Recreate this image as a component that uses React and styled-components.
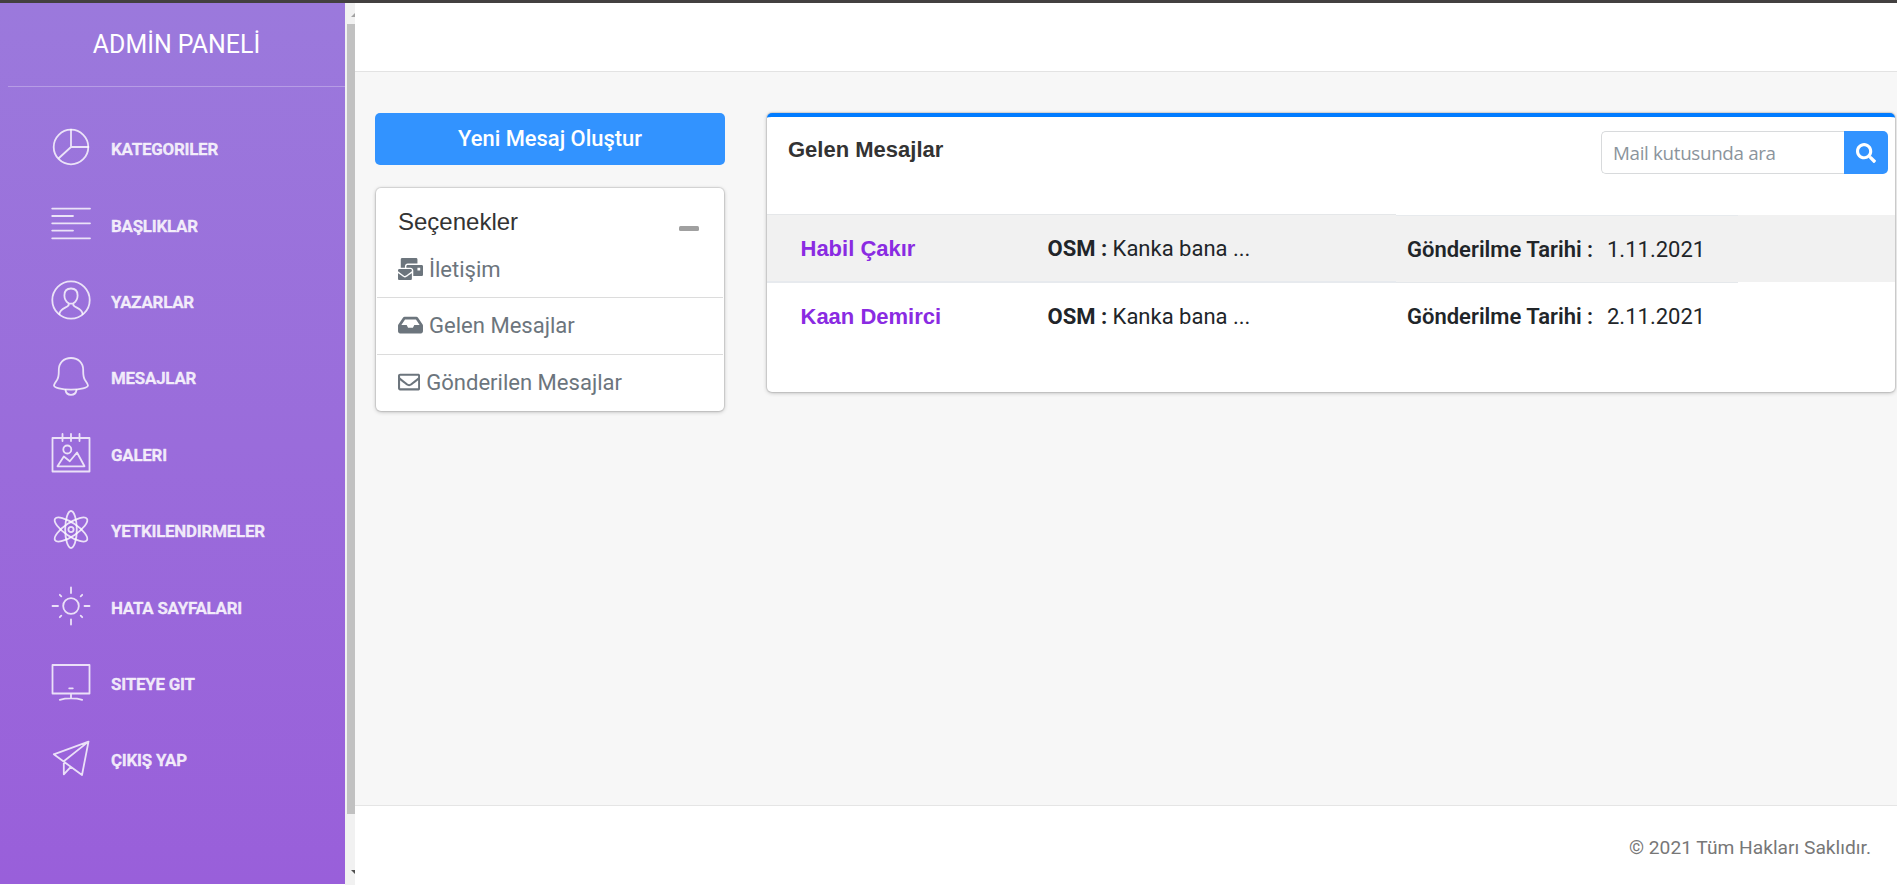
import React from "react";
import styled, { createGlobalStyle } from "styled-components";
import { FaMailBulk, FaInbox, FaRegEnvelope, FaSearch } from "react-icons/fa";

const GlobalStyle = createGlobalStyle`
  * { box-sizing: border-box; }
  html, body { margin: 0; padding: 0; }
  body { font-family: Roboto, "Liberation Sans", sans-serif; color: #212529; overflow: hidden; }
`;

const Page = styled.div`
  display: flex;
  width: 1897px;
  height: 885px;
  border-top: 3px solid #434040;
  background: #fff;
`;

const Sidebar = styled.aside`
  width: 345px;
  height: 881px;
  flex: none;
  background: linear-gradient(180deg, #9b79dc 0%, #995fda 100%);
`;

const Brand = styled.div`
  height: 84px;
  margin-left: 8px;
  padding-top: 26px;
  border-bottom: 1px solid rgba(255, 255, 255, 0.28);
  color: #fff;
  font-size: 24.9px;
  line-height: 32px;
  text-align: center;
`;

const Nav = styled.nav`
  display: flex;
  flex-direction: column;
  padding-top: 24px;
`;

const NavItem = styled.a`
  display: flex;
  align-items: center;
  height: 76.4px;
  padding-left: 51px;
  gap: 20px;
  color: rgba(255, 255, 255, 0.86);
  font-size: 16.9px;
  font-weight: 700;
  letter-spacing: -0.22px;
  -webkit-text-stroke: 0.35px rgba(255, 255, 255, 0.7);
  white-space: nowrap;

  svg {
    width: 40px;
    height: 40px;
    flex: none;
    margin-top: -4px;
    overflow: visible;
    fill: none;
    stroke: rgba(255, 255, 255, 0.8);
    stroke-width: 1.8;
    stroke-linecap: round;
    stroke-linejoin: round;
  }
`;

const ScrollTrack = styled.div`
  display: flex;
  flex-direction: column;
  justify-content: space-between;
  width: 10px;
  flex: none;
  padding-left: 2px;
  background: #f1f1f1;
`;

const ScrollThumb = styled.div`
  height: 790px;
  background: #c1c1c1;
`;

const ScrollArrow = styled.svg`
  display: block;
  width: 4px;
  height: 4px;
  margin: ${(p) => (p.$down ? "0 0 11px 4px" : "10px 0 7px 4px")};
  fill: ${(p) => (p.$down ? "#505050" : "#a3a3a3")};
`;

const ScrollHead = styled.div`
  display: flex;
  flex-direction: column;
`;

const Main = styled.div`
  display: flex;
  flex-direction: column;
  flex: 1;
  min-width: 0;
`;

const TopBar = styled.header`
  height: 69px;
  flex: none;
  background: #fff;
  border-bottom: 1px solid #e3e3e3;
`;

const Content = styled.main`
  display: flex;
  align-items: flex-start;
  gap: 42px;
  flex: 1;
  padding: 41px 2px 0 20px;
  background: #f7f7f7;
`;

const Footer = styled.footer`
  height: 80px;
  flex: none;
  padding: 27px 26px 0 0;
  border-top: 1px solid #e5e5e5;
  background: #fff;
  color: #777;
  font-size: 19.2px;
  line-height: 30px;
  text-align: right;
`;

const SideColumn = styled.div`
  display: flex;
  flex-direction: column;
  gap: 23px;
  width: 350px;
  flex: none;
`;

const ComposeButton = styled.button`
  height: 52px;
  padding: 0;
  border: 0;
  border-radius: 5px;
  background: #3293ff;
  color: #fff;
  font: 500 21.9px/50px Roboto, sans-serif;
`;

const Card = styled.section`
  border-radius: 5px;
  background: #fff;
  box-shadow: 0 0 1px 1px rgba(0, 0, 0, 0.1), 0 1px 4px rgba(0, 0, 0, 0.24);
`;

const OptionsCard = styled(Card)`
  height: 223px;
  margin: 0 1px;
  padding: 0 1px;
`;

const OptionsHead = styled.div`
  display: flex;
  align-items: center;
  justify-content: space-between;
  height: 53px;
  padding: 15px 24px 0 21px;
`;

const OptionsTitle = styled.h3`
  margin: 0;
  color: #333;
  font: 400 24px/30px "Liberation Sans", Arial, sans-serif;
`;

const Minus = styled.span`
  width: 20px;
  height: 5px;
  margin-top: 12px;
  border-radius: 1.5px;
  background: #a0a0a0;
`;

const Option = styled.a`
  display: flex;
  align-items: center;
  gap: 6px;
  height: 57px;
  padding: 0 0 ${(p) => p.$lift || 0}px 21px;
  border-bottom: ${(p) => (p.$last ? "0" : "1px solid #dcdcdc")};
  color: #6c757d;
  font-size: 22.05px;

  svg {
    width: ${(p) => p.$icon || 25}px;
    height: 22.2px;
    flex: none;
  }
`;

const InboxCard = styled(Card)`
  flex: 1;
  height: 279px;
  border-top: 4px solid #007bff;
`;

const InboxHead = styled.div`
  display: flex;
  justify-content: space-between;
  align-items: flex-start;
  height: 97px;
  padding: 14px 7px 0 21px;
`;

const InboxTitle = styled.h3`
  margin: 5px 0 0;
  color: #333;
  font: 700 22px/28px "Liberation Sans", Arial, sans-serif;
`;

const SearchBox = styled.div`
  display: flex;
  width: 287px;
  height: 43px;
`;

const SearchInput = styled.input`
  flex: 1;
  min-width: 0;
  padding: 0 12px 0 11px;
  border: 1px solid #d8dadc;
  border-right: 0;
  border-radius: 5px 0 0 5px;
  outline: 0;
  font: 400 18.8px "Open Sans", "Noto Sans", sans-serif;
  letter-spacing: -0.33px;

  &::placeholder { color: #8b949c; opacity: 1; }
`;

const SearchButton = styled.button`
  display: flex;
  align-items: center;
  justify-content: center;
  width: 44px;
  padding: 0;
  border: 0;
  border-radius: 0 5px 5px 0;
  background: #3293ff;
  color: #fff;
  font-size: 20px;
`;

const Row = styled.div`
  display: flex;
  height: 68px;
  font-size: 22px;
  line-height: 32px;
  white-space: nowrap;
`;

const cellFill = (p) => (p.$shaded ? "#f1f1f1" : "transparent");

const LeadCells = styled.div`
  display: flex;
  width: 629px;
  height: ${(p) => (p.$shaded ? 69 : 68)}px;
  padding: 18px 0 0 33.5px;
  border-top: 1px solid ${(p) => (p.$shaded ? "#e5e7e9" : "transparent")};
  border-bottom: ${(p) => (p.$shaded ? "2px solid #e7eaee" : "0")};
  background: ${cellFill};
`;

const Sender = styled.a`
  width: 247px;
  padding-top: 1px;
  color: #8a2be2;
  font: 700 22px/30px "Liberation Sans", Arial, sans-serif;
`;

const DateCell = styled.div`
  display: flex;
  width: 342px;
  height: ${(p) => (p.$shaded ? 68 : 67)}px;
  margin-top: 1px;
  padding: ${(p) => (p.$shaded ? 18 : 17)}px 0 0 11px;
  border-top: 1px solid ${(p) => (p.$shaded ? "#e7eaed" : "transparent")};
  border-bottom: ${(p) => (p.$shaded ? "1px solid #e5e8eb" : "0")};
  background: ${cellFill};
`;

const DateLabel = styled.b`
  width: 200px;
  font-weight: 600;
`;

const Strong = styled.b`
  font-weight: 700;
`;

const RowTail = styled.div`
  flex: 1;
  margin-top: 1px;
  background: ${cellFill};
`;

const navItems = [
  { label: "KATEGORILER", icon: <><circle cx="20" cy="20" r="17.3" /><path d="M20 2.7V20H37.3M20 20L8 31" /></> },
  { label: "BAŞLIKLAR", icon: <path d="M1.2 4.6H39M1.2 12H22M1.2 19.3H39M1.2 26.6H22M1.2 34.3H39" /> },
  { label: "YAZARLAR", icon: <><circle cx="20" cy="20" r="18.7" /><path d="M20 8.5C16 8.5 13.4 11 13.4 15.4C13.4 19 15 21.5 17.6 23.2V25.2C16 28 9.2 28 8.4 34M20 8.5C24 8.5 26.6 11 26.6 15.4C26.6 19 25 21.5 22.4 23.2V25.2C24 28 30.8 28 31.6 34M17.6 23.6H22.4" /></> },
  { label: "MESAJLAR", icon: <><path d="M20 2C12.5 2 7.8 7 7.8 14C7.8 19 8 21 6 24C4.5 26.1 3 28 3 29.5C3 31.5 10.5 33.7 20 33.7S37 31.5 37 29.5C37 28 35.5 26.1 34 24C32 21 32.2 19 32.2 14C32.2 7 27.5 2 20 2Z" /><path d="M14.5 34C15 37.3 17 38.8 20 38.8S25 37.3 25.5 34" /></> },
  { label: "GALERI", icon: <><path d="M1.5 5H38.5V38.5H1.5ZM11.5 1V8M20 1V8M28.5 1V8" /><circle cx="16.3" cy="16.5" r="4" /><path d="M6.5 33.3L12.8 23.5L18.8 28.3L26 19.5L33.5 33.3Z" /></> },
  { label: "YETKILENDIRMELER", icon: <><ellipse cx="20" cy="20.5" rx="5.8" ry="18.5" /><ellipse cx="20" cy="20.5" rx="6.5" ry="19.2" transform="rotate(56 20 20.5)" /><ellipse cx="20" cy="20.5" rx="6.5" ry="19.2" transform="rotate(-56 20 20.5)" /><circle cx="20" cy="20.5" r="2.6" /></> },
  { label: "HATA SAYFALARI", icon: <><circle cx="20" cy="20" r="7.8" /><path d="M20 1.5V7M20 33.5V38.5M1.5 20H7M33.5 20H38.5M8.8 8.8L10.3 10.3M31.2 8.8L29.7 10.3M8.8 31.2L10.3 29.7M31.2 31.2L29.7 29.7" /></> },
  { label: "SITEYE GIT", icon: <path d="M1.5 3H38.5V31.5H1.5ZM18.2 26.3H21.8M20 31.5V36M8.8 37.8C15 36 25 36 31.2 37.8" /> },
  { label: "ÇIKIŞ YAP", icon: <path d="M2.8 16.3L37.5 3.6L31 37L2.8 16.3M37.5 3.6L12.8 23.3V36.3L19.8 28.8" /> },
];

const messages = [
  { sender: "Habil Çakır", date: "1.11.2021", shaded: true },
  { sender: "Kaan Demirci", date: "2.11.2021", shaded: false },
];

export default function App() {
  return (
    <>
      <GlobalStyle />
      <Page>
        <Sidebar>
          <Brand>ADMİN PANELİ</Brand>
          <Nav>
            {navItems.map((item) => (
              <NavItem key={item.label}>
                <svg viewBox="0 0 40 40">{item.icon}</svg>
                {item.label}
              </NavItem>
            ))}
          </Nav>
        </Sidebar>
        <ScrollTrack>
          <ScrollHead>
            <ScrollArrow viewBox="0 0 4 4"><path d="M0 4L4 0V4Z" /></ScrollArrow>
            <ScrollThumb />
          </ScrollHead>
          <ScrollArrow $down viewBox="0 0 4 4"><path d="M0 0H4V4Z" /></ScrollArrow>
        </ScrollTrack>
        <Main>
          <TopBar />
          <Content>
            <SideColumn>
              <ComposeButton>Yeni Mesaj Oluştur</ComposeButton>
              <OptionsCard>
                <OptionsHead>
                  <OptionsTitle>Seçenekler</OptionsTitle>
                  <Minus />
                </OptionsHead>
                <Option><FaMailBulk preserveAspectRatio="none" />İletişim</Option>
                <Option $lift={2}><FaInbox />Gelen Mesajlar</Option>
                <Option $last $lift={3} $icon={22.2}><FaRegEnvelope />Gönderilen Mesajlar</Option>
              </OptionsCard>
            </SideColumn>
            <InboxCard>
              <InboxHead>
                <InboxTitle>Gelen Mesajlar</InboxTitle>
                <SearchBox>
                  <SearchInput placeholder="Mail kutusunda ara" />
                  <SearchButton><FaSearch /></SearchButton>
                </SearchBox>
              </InboxHead>
              {messages.map((m) => (
                <Row key={m.sender}>
                  <LeadCells $shaded={m.shaded}>
                    <Sender>{m.sender}</Sender>
                    <span><Strong>OSM :</Strong> Kanka bana ...</span>
                  </LeadCells>
                  <DateCell $shaded={m.shaded}>
                    <DateLabel>Gönderilme Tarihi :</DateLabel>
                    <span>{m.date}</span>
                  </DateCell>
                  <RowTail $shaded={m.shaded} />
                </Row>
              ))}
            </InboxCard>
          </Content>
          <Footer>© 2021 Tüm Hakları Saklıdır.</Footer>
        </Main>
      </Page>
    </>
  );
}
